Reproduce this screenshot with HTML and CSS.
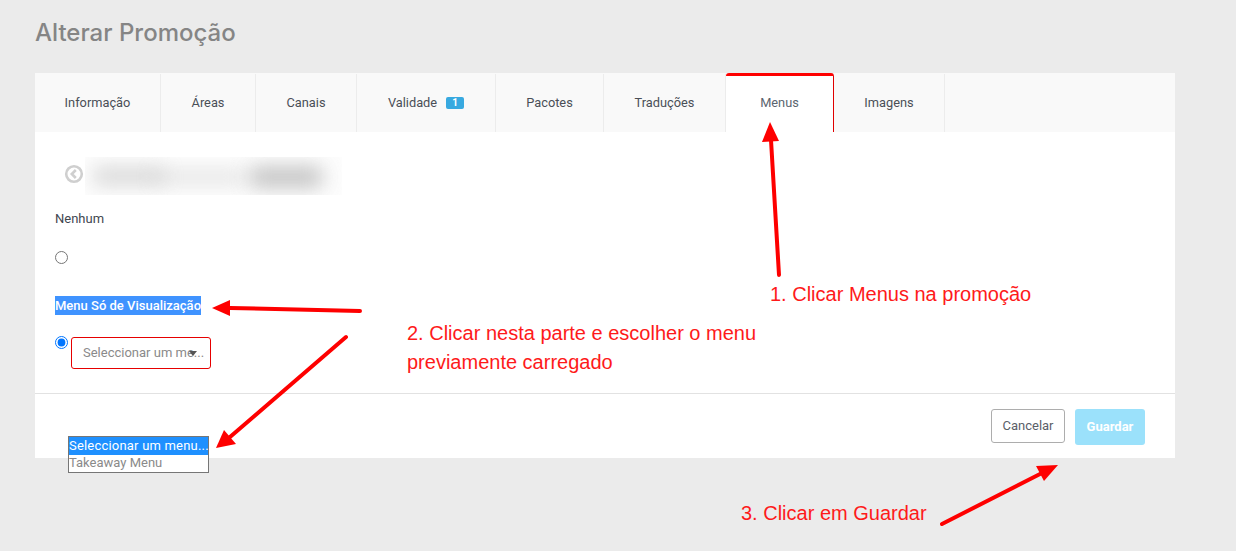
FILE: index.html
```html
<!DOCTYPE html>
<html lang="pt">
<head>
    <meta charset="UTF-8">
    <meta name="viewport" content="width=device-width, initial-scale=1.0">
    <title>Alterar Promoção</title>
    <link rel="stylesheet" href="styles.css">
</head>
<body>
    <h1 class="page-title">Alterar Promoção</h1>

    <div class="card">
        <div class="tabs">
            <div class="tab tab-info">Informação</div>
            <div class="tab tab-areas">Áreas</div>
            <div class="tab tab-canais">Canais</div>
            <div class="tab tab-validade">Validade <span class="badge">1</span></div>
            <div class="tab tab-pacotes">Pacotes</div>
            <div class="tab tab-traducoes">Traduções</div>
            <div class="tab tab-menus active">Menus</div>
            <div class="tab tab-imagens">Imagens</div>
        </div>

        <div class="panel">
            <div class="back-row">
                <svg class="back-icon" width="20" height="20" viewBox="0 0 20 20">
                    <circle cx="10" cy="10" r="7.8" fill="none" stroke="#cfcfcf" stroke-width="2.6"/>
                    <path d="M11.8 6 L7.8 10 L11.8 14" fill="none" stroke="#cfcfcf" stroke-width="2.6"/>
                </svg>
                <div class="blurred">
                    <div class="blur blur-a"></div>
                    <div class="blur blur-b"></div>
                    <div class="blur blur-c"></div>
                </div>
            </div>

            <div class="field-label">Nenhum</div>
            <input class="radio radio-none" type="radio" name="menu">

            <div class="field-label"><span class="selected-text">Menu Só de Visualização</span></div>
            <div class="select-row">
                <input class="radio" type="radio" name="menu" checked>
                <div class="select-box">Seleccionar um me...<span class="caret"></span></div>
            </div>
        </div>

        <div class="footer">
            <button class="btn btn-cancel">Cancelar</button>
            <button class="btn btn-save">Guardar</button>
        </div>
    </div>

    <!-- lista aberta do select -->
    <div class="dropdown">
        <div class="option option-selected">Seleccionar um menu...</div>
        <div class="option">Takeaway Menu</div>
    </div>

    <!-- anotações por cima do ecrã -->
    <svg class="arrows" width="1236" height="551" viewBox="0 0 1236 551">
        <g stroke="#fe0000" stroke-width="4" stroke-linecap="round" fill="#fe0000">
            <line x1="779" y1="275" x2="771" y2="140"/>
            <line x1="360" y1="311" x2="230" y2="308"/>
            <line x1="346" y1="337" x2="230" y2="437"/>
            <line x1="942" y1="524" x2="1042" y2="473"/>
        </g>
        <g fill="#fe0000">
            <polygon points="770,122 762,142 779,141"/>
            <polygon points="212,308 230,300 230,316"/>
            <polygon points="216,448 224,430 236,444"/>
            <polygon points="1058,465 1036,466 1044,481"/>
        </g>
    </svg>
    <div class="note note-1">1. Clicar Menus na promoção</div>
    <div class="note note-2">2. Clicar nesta parte e escolher o menu<br>previamente carregado</div>
    <div class="note note-3">3. Clicar em Guardar</div>
</body>
</html>
```

FILE: styles.css
```css
html, body {
    height: 100%;
}
body {
    margin: 0;
    padding: 0 61px 0 35px;
    background-color: #ebebeb;
    font-family: Roboto, "Liberation Sans", sans-serif;
    font-size: 13px;
    color: #4a4f57;
    overflow: hidden;
}
.page-title {
    margin: 0;
    padding-top: 18px;
    height: 55px;
    line-height: 30px;
    font-family: Inter, "Open Sans", sans-serif;
    font-size: 24px;
    font-weight: 500;
    color: #858585;
    box-sizing: border-box;
}
.card {
    margin-top: 18px;
    background-color: white;
}
.tabs {
    display: flex;
    height: 59px;
    background-color: #f9f9f9;
}
.tab {
    display: flex;
    align-items: center;
    justify-content: center;
    box-sizing: border-box;
    margin-top: 1px;
    padding-bottom: 2px;
    font-size: 12.8px;
    border-right: 1px solid #ececec;
}
.tab-info { width: 126px; }
.tab-areas { width: 95px; }
.tab-canais { width: 101px; }
.tab-validade { width: 139px; }
.tab-pacotes { width: 108px; }
.tab-traducoes { width: 122px; }
.tab-menus { width: 108px; }
.tab-imagens { width: 111px; }
.tab.active {
    margin-top: 0;
    background-color: white;
    border-top: 3px solid #fe0000;
    border-right: 1px solid #e00000;
    border-radius: 3px 3px 0 0;
    padding-bottom: 4px;
    color: #5b6570;
}
.badge {
    margin-left: 9px;
    margin-top: 2px;
    width: 18px;
    height: 12px;
    line-height: 12px;
    background-color: #38a9e0;
    color: white;
    font-size: 10px;
    font-weight: bold;
    text-align: center;
    border-radius: 2px;
}
.panel {
    height: 261px;
    box-sizing: border-box;
    padding: 25px 20px 0;
}
.back-row {
    display: flex;
    align-items: center;
    height: 38px;
    padding-left: 9px;
}
.back-icon {
    margin-bottom: 4px;
}
.blurred {
    position: relative;
    width: 257px;
    height: 38px;
    margin-left: 1px;
    overflow: hidden;
    background-color: #fdfdfd;
}
.blur {
    position: absolute;
    background-color: #b0b0b0;
    filter: blur(10px);
}
.blur-a {
    left: 8px;
    top: 10px;
    width: 70px;
    height: 18px;
    opacity: 0.5;
}
.blur-b {
    left: 70px;
    top: 13px;
    width: 90px;
    height: 14px;
    opacity: 0.35;
}
.blur-c {
    left: 165px;
    top: 10px;
    width: 72px;
    height: 20px;
    opacity: 0.8;
}
.field-label {
    margin-top: 16px;
    line-height: 15px;
    color: #3f4650;
}
.radio {
    display: block;
    margin: 0;
    width: 13px;
    height: 13px;
}
.radio-none {
    margin-top: 25px;
    margin-bottom: 32px;
}
.radio-none + .field-label {
    margin-top: 0;
    height: 19px;
    line-height: 19px;
}
.selected-text {
    display: inline-block;
    background-color: #3f93ff;
    color: white;
    font-weight: 500;
    height: 19px;
}
.select-row {
    display: flex;
    margin-top: 21px;
}
.select-box {
    position: relative;
    box-sizing: border-box;
    width: 140px;
    height: 32px;
    margin-left: 3px;
    margin-top: 1px;
    padding-left: 11px;
    line-height: 30px;
    border: 1px solid #e60000;
    border-radius: 3px;
    color: #8a8a8a;
    white-space: nowrap;
}
.caret {
    position: absolute;
    left: 117px;
    top: 13px;
    width: 0;
    height: 0;
    border-left: 4px solid transparent;
    border-right: 4px solid transparent;
    border-top: 5px solid #555;
}
.footer {
    display: flex;
    justify-content: flex-end;
    align-items: flex-start;
    gap: 10px;
    height: 65px;
    box-sizing: border-box;
    padding: 15px 30px 0 0;
    border-top: 1px solid #e2e2e2;
}
.btn {
    font-family: Roboto, "Liberation Sans", sans-serif;
    font-size: 13px;
    border-radius: 3px;
    padding: 0 0 2px;
}
.btn-cancel {
    width: 74px;
    height: 34px;
    background-color: white;
    border: 1px solid #adadad;
    color: #5a6068;
}
.btn-save {
    width: 70px;
    height: 36px;
    background-color: #9be1fb;
    border: none;
    color: white;
    font-weight: bold;
}
.dropdown {
    position: absolute;
    left: 68px;
    top: 436px;
    width: 141px;
    box-sizing: border-box;
    background-color: white;
    border: 1px solid #767676;
    font-size: 13px;
    color: #8a8a8a;
}
.option {
    height: 17px;
    line-height: 15px;
    white-space: nowrap;
}
.option-selected {
    height: 18px;
    line-height: 17px;
    background-color: #1e90ff;
    color: white;
    letter-spacing: 0.2px;
}
.arrows {
    position: absolute;
    left: 0;
    top: 0;
    pointer-events: none;
}
.note {
    position: absolute;
    font-family: "Liberation Sans", Arial, sans-serif;
    font-size: 20px;
    line-height: 30px;
    color: #fe1a1a;
    white-space: nowrap;
}
.note-1 {
    left: 770px;
    top: 279px;
}
.note-2 {
    left: 407px;
    top: 319px;
    line-height: 29px;
}
.note-3 {
    left: 741px;
    top: 498px;
}
```
